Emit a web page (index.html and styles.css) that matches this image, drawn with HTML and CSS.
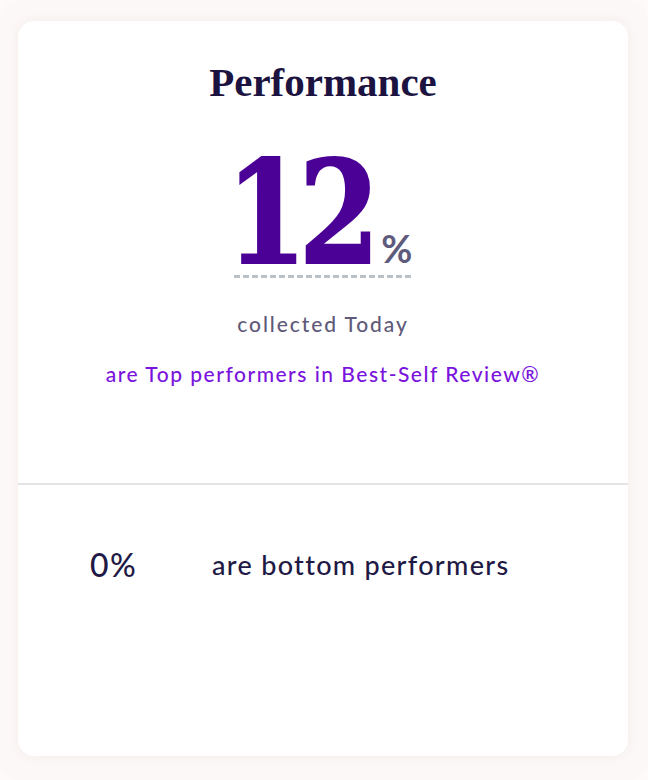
FILE: index.html
```html
<!DOCTYPE html>
<html>
<head>
<meta charset="utf-8">
<link rel="stylesheet" href="styles.css">
</head>
<body>
<div class="frame">
  <div class="card">
    <section class="top">
      <h1 class="title">Performance</h1>
      <div class="metric">
        <span class="big"><span class="digits">12</span></span><span class="pct">%</span>
      </div>
      <p class="caption">collected Today</p>
      <p class="highlight">are Top performers in Best-Self Review®</p>
    </section>
    <section class="bottom">
      <span class="bval">0%</span>
      <span class="blabel">are bottom performers</span>
    </section>
  </div>
</div>
</body>
</html>
```
FILE: styles.css
```css
html, body {
  margin: 0;
  padding: 0;
  background: #fdfaf9;
}
.frame {
  width: 648px;
  height: 780px;
  box-sizing: border-box;
  padding: 21px 20px 24px 18px;
  background: #fcf8f7;
  border-radius: 20px;
}
.card {
  height: 735px;
  background: #ffffff;
  border-radius: 16px;
  box-shadow: 0 0 10px rgba(230, 215, 210, 0.35);
  display: flex;
  flex-direction: column;
  overflow: hidden;
}
.top {
  height: 464px;
  flex: none;
  border-bottom: 2px solid #e4e4e7;
  display: flex;
  flex-direction: column;
  align-items: center;
  box-sizing: border-box;
  padding-top: 38px;
}
.title {
  margin: 0;
  font-family: "Liberation Serif", serif;
  font-weight: 700;
  font-size: 41px;
  line-height: 46px;
  color: #1c1340;
}
.metric {
  margin-top: 53px;
  display: flex;
  align-items: flex-end;
}
.big {
  font-family: "DejaVu Serif", serif;
  font-weight: 700;
  font-size: 142px;
  line-height: 110px;
  padding-bottom: 10px;
  color: #4b0096;
  background-image: linear-gradient(to right, #bac1c7 0 6px, transparent 6px 9px);
  background-size: 9px 3px;
  background-repeat: repeat-x;
  background-position: left bottom;
}
.digits {
  display: inline-block;
  letter-spacing: -10px;
  -webkit-text-stroke: 2px #4b0096;
  transform: scaleX(0.82);
  margin: 0 -13px 0 -24px;
}
.pct {
  font-family: "Lato", sans-serif;
  font-weight: 700;
  font-size: 38px;
  line-height: 38px;
  padding: 0 0 11px 7px;
  color: #5f5b7d;
  background-image: linear-gradient(to right, #bac1c7 0 6px, transparent 6px 9px);
  background-size: 9px 3px;
  background-repeat: repeat-x;
  background-position: 4px bottom;
}
.caption {
  margin: 34px 0 0;
  font-family: "Lato", sans-serif;
  font-weight: 500;
  font-size: 21px;
  line-height: 24px;
  letter-spacing: 1.9px;
  color: #5f5a7a;
}
.highlight {
  margin: 26px 0 0;
  font-family: "Lato", sans-serif;
  font-weight: 500;
  font-size: 21px;
  line-height: 24px;
  letter-spacing: 1.5px;
  color: #7a14dd;
}
.bottom {
  display: flex;
  align-items: center;
  padding: 62px 0 0 72px;
  font-family: "Lato", sans-serif;
  font-weight: 500;
  color: #1f1a45;
}
.bval {
  font-size: 32px;
  line-height: 36px;
  letter-spacing: 1.5px;
  width: 122px;
}
.blabel {
  font-size: 27px;
  line-height: 32px;
  letter-spacing: 1.3px;
}
```
